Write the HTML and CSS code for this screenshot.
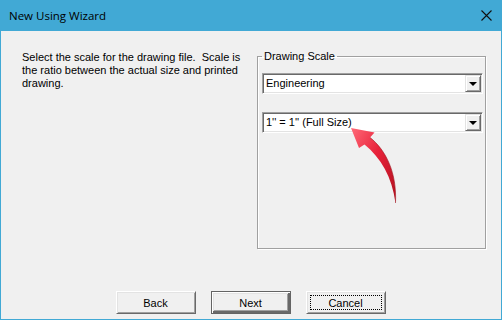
FILE: index.html
```html
<!DOCTYPE html>
<html>
<head>
<meta charset="utf-8">
<link rel="stylesheet" href="styles.css">
</head>
<body>
<div class="window">
  <div class="titlebar">
    <span class="title">New Using Wizard</span>
    <svg class="close" width="11" height="11" viewBox="0 0 11 11"><path d="M0.5 0.5 L10.5 10.5 M10.5 0.5 L0.5 10.5" stroke="#111" stroke-width="1.1" fill="none"/></svg>
  </div>
  <div class="client">
    <div class="main">
      <p class="desc">Select the scale for the drawing file.&nbsp; Scale is the ratio between the actual size and printed drawing.</p>
      <fieldset class="group">
        <legend>Drawing Scale</legend>
        <div class="combo"><span class="value">Engineering</span><span class="drop"><i class="tri"></i></span></div>
        <div class="combo"><span class="value">1'' = 1'' (Full Size)</span><span class="drop"><i class="tri"></i></span></div>
      </fieldset>
    </div>
    <div class="buttons">
      <button class="btn">Back</button>
      <button class="btn default">Next</button>
      <button class="btn focus"><span class="focusrect">Cancel</span></button>
    </div>
    <svg class="arrow" width="70" height="90" viewBox="0 0 70 90">
      <defs>
        <linearGradient id="g" x1="0" y1="0" x2="1" y2="1">
          <stop offset="0" stop-color="#ff6a78"/>
          <stop offset="0.45" stop-color="#e8223a"/>
          <stop offset="1" stop-color="#b0101e"/>
        </linearGradient>
      </defs>
      <path d="M11 7 L34.5 11.5 L30 16.5 C46 29 57 52 55.5 82 C52 56 41 37 24.5 23.5 L19 27 Z" fill="url(#g)"/>
      <path d="M30 16.5 C46 29 57 52 55.5 82" stroke="#9c0c18" stroke-width="1" fill="none" opacity="0.6"/>
    </svg>
  </div>
</div>
</body>
</html>
```
FILE: styles.css
```css
* { box-sizing: border-box; }
html, body { margin: 0; padding: 0; }
body { width: 502px; height: 320px; overflow: hidden; background: #41a9d5; }

.window {
  width: 502px;
  height: 320px;
  background: #41a9d5;
  padding: 0 1px 1px 1px;
  display: flex;
  flex-direction: column;
}

.titlebar {
  height: 31px;
  flex: none;
  display: flex;
  align-items: center;
  justify-content: space-between;
  padding: 0 9px 1px 8px;
}
.title {
  font-family: "Open Sans", "Noto Sans", sans-serif;
  font-size: 11.5px;
  color: #000;
}
.close { display: block; }

.client {
  flex: 1;
  background: #f0f0f0;
  display: flex;
  flex-direction: column;
  position: relative;
  font-family: "Liberation Sans", Arial, sans-serif;
  font-size: 11px;
  color: #000;
}

.main {
  flex: 1;
  display: flex;
  padding: 18px 15px 0 21px;
}

.desc {
  margin: 2px 0 0 0;
  width: 225px;
  line-height: 13px;
  flex: none;
}

.group {
  margin: 1px 0 0 10px;
  width: 230px;
  height: 199px;
  border: 1px solid #a0a0a0;
  box-shadow: inset 1px 1px 0 #fff, 1px 1px 0 #fff;
  padding: 10px 3px 0 4px;
  min-width: 0;
}
.group legend {
  padding: 0 2px;
  margin-left: 0;
  line-height: 13px;
}

.combo {
  width: 221px;
  height: 21px;
  background: #fff;
  border-style: solid;
  border-width: 1px;
  border-color: #a0a0a0 #fff #fff #a0a0a0;
  box-shadow: inset 1px 1px 0 #696969, inset -1px -1px 0 #e3e3e3;
  display: flex;
  align-items: center;
  justify-content: space-between;
  padding: 1px 2px 1px 3px;
  margin-bottom: 18px;
}
.value { line-height: 13px; }
.drop {
  width: 16px;
  height: 17px;
  background: #f0f0f0;
  border-style: solid;
  border-width: 1px;
  border-color: #e3e3e3 #696969 #696969 #e3e3e3;
  box-shadow: inset 1px 1px 0 #fff, inset -1px -1px 0 #a0a0a0;
  display: flex;
  align-items: center;
  justify-content: center;
  margin-right: -1px;
}
.tri {
  width: 0;
  height: 0;
  border-left: 4px solid transparent;
  border-right: 4px solid transparent;
  border-top: 4px solid #000;
  margin-top: 1px;
}

.buttons {
  flex: none;
  display: flex;
  justify-content: center;
  gap: 15px;
  padding: 0 0 5px 0;
  margin-left: -1px;
}
.btn {
  width: 80px;
  height: 23px;
  font-family: "Liberation Sans", Arial, sans-serif;
  font-size: 11px;
  color: #000;
  background: #f0f0f0;
  border-style: solid;
  border-width: 1px;
  border-color: #fff #696969 #696969 #fff;
  box-shadow: inset 1px 1px 0 #e3e3e3, inset -1px -1px 0 #a0a0a0;
  padding: 0;
  margin: 0;
  display: flex;
  align-items: center;
  justify-content: center;
}
.btn.default {
  border: 1px solid #646464;
  box-shadow: inset 1px 1px 0 #fff, inset -2px -2px 0 #696969, inset 2px 2px 0 #e3e3e3, inset -3px -3px 0 #a0a0a0;
}
.btn.focus { padding: 3px; }
.focusrect {
  flex: 1;
  align-self: stretch;
  border: 1px dotted #000;
  display: flex;
  align-items: center;
  justify-content: center;
}

.arrow {
  position: absolute;
  left: 339px;
  top: 90px;
}
```
